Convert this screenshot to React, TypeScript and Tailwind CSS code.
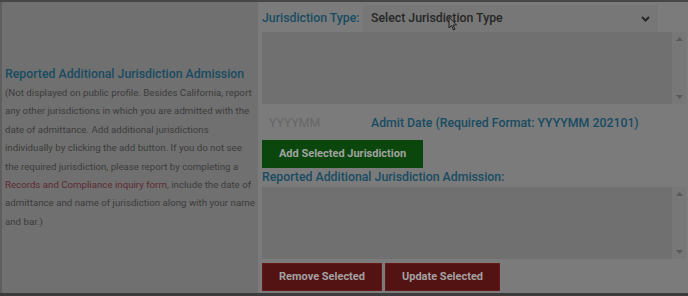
import React from "react";

function ListBox() {
  return (
    <div className="flex h-[72px] bg-[#707070]">
      <div className="flex-1" />
      <div className="w-[14px] bg-[#777777] flex flex-col justify-between items-center py-[5px]">
        <svg width="7" height="4" viewBox="0 0 7 4"><path d="M0 4 L3.5 0 L7 4Z" fill="#5a5a5a" /></svg>
        <svg width="7" height="4" viewBox="0 0 7 4"><path d="M0 0 L3.5 4 L7 0Z" fill="#5a5a5a" /></svg>
      </div>
    </div>
  );
}

export default function App() {
  return (
    <div
      className="w-[688px] h-[296px] bg-[#7b7b7b] relative overflow-hidden"
      style={{ fontFamily: "Roboto, 'Liberation Sans', sans-serif" }}
    >
      <div className="h-[2px] bg-[#474747]" />
      <div className="flex h-[291px]">
        <div className="w-[258px] bg-[#707070] border-l-2 border-[#5e5e5e] flex flex-col justify-center pl-[3px] pr-[3px]">
          <div className="text-[12.3px] font-medium text-[#184c63] leading-[20px]">
            Reported Additional Jurisdiction Admission
          </div>
          <p className="text-[9.7px] leading-[18.4px] text-[#3c3c3c]">
            (Not displayed on public profile. Besides California, report any other jurisdictions in which you are admitted with the date of admittance. Add additional jurisdictions individually by clicking the add button. If you do not see the required jurisdiction, please report by completing a{" "}
            <span className="text-[#5e2a32]">Records and Compliance inquiry form</span>, include the date of admittance and name of jurisdiction along with your name and bar.)
          </p>
        </div>
        <div className="flex-1 pl-[4px] pr-[2px] pt-[3px] flex flex-col">
          <div className="flex items-center h-[27px]">
            <span className="w-[101px] text-[12.3px] font-medium text-[#184c63]">Jurisdiction Type:</span>
            <div className="w-[295px] h-[27px] bg-[#777777] flex items-center justify-between pl-[8px] pr-[8px]">
              <span className="text-[12.3px] font-medium text-[#262626]">Select Jurisdiction Type</span>
              <svg width="9" height="6" viewBox="0 0 9 6"><path d="M1 1 L4.5 4.5 L8 1" stroke="#262626" strokeWidth="2" fill="none" /></svg>
            </div>
          </div>
          <ListBox />
          <div className="flex items-center mt-[3px] h-[32px]">
            <div className="w-[106px] h-[32px] bg-[#7b7b7b] flex items-center pl-[7px] text-[12.3px] text-[#676767]">YYYYMM</div>
            <span className="ml-[3px] text-[12.3px] font-medium text-[#184c63]">Admit Date (Required Format: YYYYMM 202101)</span>
          </div>
          <div className="mt-[1px] w-[161px] h-[28px] bg-[#0b470d] flex items-center justify-center text-[11px] font-bold text-[#a2a2a2]">
            Add Selected Jurisdiction
          </div>
          <div className="h-[18px] text-[12.3px] font-medium text-[#184c63] leading-[18px]">
            Reported Additional Jurisdiction Admission:
          </div>
          <div className="mt-[1px]"><ListBox /></div>
          <div className="flex gap-[3px] mt-[4px]">
            <div className="w-[120px] h-[28px] bg-[#531313] border border-[#671a1a] flex items-center justify-center text-[11px] font-bold text-[#a2a2a2]">Remove Selected</div>
            <div className="w-[115px] h-[28px] bg-[#531313] border border-[#671a1a] flex items-center justify-center text-[11px] font-bold text-[#a2a2a2]">Update Selected</div>
          </div>
        </div>
      </div>
      <div className="h-[3px] bg-[#3c3c3c]" />
      <svg className="absolute left-[448px] top-[16px]" width="10" height="15" viewBox="0 0 10 15">
        <path d="M1 1 L1 12 L3.5 9.5 L5.5 14 L7 13.3 L5 9 L8.5 9 Z" fill="#7a7a7a" stroke="#222" strokeWidth="1" />
      </svg>
    </div>
  );
}
